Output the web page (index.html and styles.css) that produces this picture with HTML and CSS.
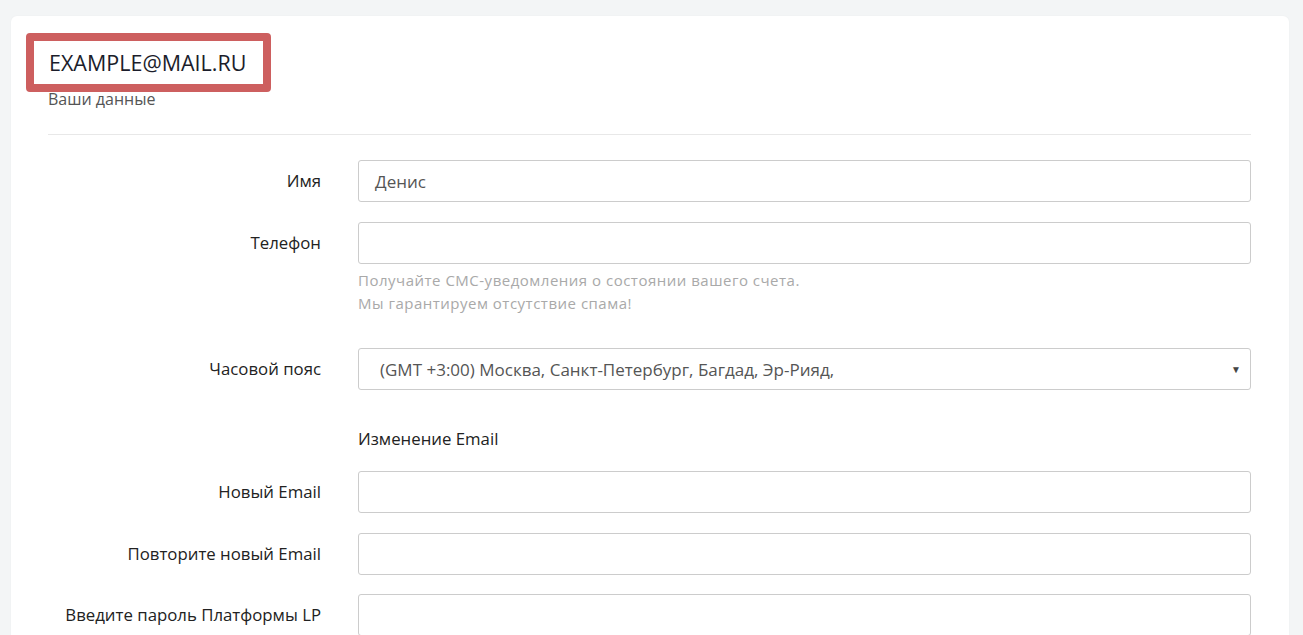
FILE: index.html
```html
<!DOCTYPE html>
<html lang="ru">
<head>
<meta charset="utf-8">
<link rel="stylesheet" href="styles.css">
</head>
<body>
<div class="page">
  <div class="card">
    <div class="head">
      <div class="title-box"><h1 class="title">EXAMPLE@MAIL.RU</h1></div>
      <div class="subtitle">Ваши данные</div>
    </div>
    <div class="sep"></div>
    <form class="form">
      <div class="row">
        <label class="label">Имя</label>
        <div class="field"><div class="input">Денис</div></div>
      </div>
      <div class="row">
        <label class="label">Телефон</label>
        <div class="field">
          <div class="input"></div>
          <p class="help">Получайте СМС-уведомления о состоянии вашего счета.<br>Мы гарантируем отсутствие спама!</p>
        </div>
      </div>
      <div class="row row-select">
        <label class="label">Часовой пояс</label>
        <div class="field">
          <div class="input select"><span>(GMT +3:00) Москва, Санкт-Петербург, Багдад, Эр-Рияд,</span><span class="caret">▼</span></div>
        </div>
      </div>
      <div class="row row-section">
        <div class="label"></div>
        <div class="field"><div class="section">Изменение Email</div></div>
      </div>
      <div class="row">
        <label class="label">Новый Email</label>
        <div class="field"><div class="input"></div></div>
      </div>
      <div class="row">
        <label class="label">Повторите новый Email</label>
        <div class="field"><div class="input"></div></div>
      </div>
      <div class="row row-last">
        <label class="label">Введите пароль Платформы LP</label>
        <div class="field"><div class="input"></div></div>
      </div>
    </form>
  </div>
</div>
</body>
</html>
```

FILE: styles.css
```css
* { box-sizing: border-box; }
html, body { margin: 0; padding: 0; }
body {
  background: #f3f5f6;
  font-family: "Open Sans", "Lato", sans-serif;
  color: #333;
  height: 635px;
  overflow: hidden;
}
.page { padding: 16px 14px 0 11px; }
.card {
  background: #fff;
  border-radius: 6px;
  padding: 17px 38px 0 15px;
  min-height: 700px;
  box-shadow: 0 0 2px rgba(0,0,0,0.04);
}
.head { position: relative; height: 101px; }
.title-box {
  position: absolute;
  left: 0; top: 0;
  width: 245px; height: 59px;
  border: 8px solid #cd5f5f;
  border-radius: 4px;
  background: #fff;
  display: flex; align-items: center;
  padding-left: 15px;
}
.title {
  margin: 0;
  font-size: 21.5px;
  font-weight: 400;
  color: #1b1d2b;
}
.subtitle {
  position: absolute;
  left: 22px; top: 55px;
  font-size: 16px;
  line-height: 22px;
  color: #555;
}
.sep { margin-left: 22px; border-top: 1px solid #e8e8e8; }
.form { padding-left: 22px; padding-top: 25px; }
.row { display: flex; margin-bottom: 20px; }
.label {
  width: 273px;
  flex: 0 0 273px;
  text-align: right;
  padding-top: 10px;
  font-size: 16.8px;
  line-height: 22px;
  color: #222;
}
.field { flex: 1; margin-left: 37px; }
.input {
  height: 42px;
  border: 1px solid #ccc;
  border-radius: 3px;
  padding: 0 16px;
  display: flex; align-items: center;
  font-size: 17px;
  color: #555;
}
.help {
  margin: 5px 0 0 0;
  font-size: 15px;
  line-height: 23px;
  letter-spacing: 0.5px;
  color: #a9a9a9;
}
.row-select { margin-top: 33px; }
.select { padding: 0 9px 0 21px; justify-content: space-between; }
.caret { font-size: 10px; color: #444; }
.row-section { margin-top: 38px; margin-bottom: 21px; }
.section { font-size: 16.8px; line-height: 22px; color: #222; }
.row-last { margin-top: -1px; }
```
